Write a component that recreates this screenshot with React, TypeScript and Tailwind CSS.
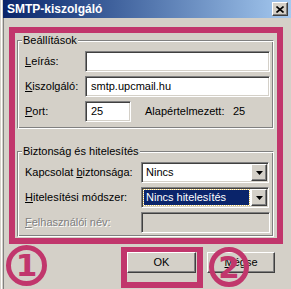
import React from "react";

const sunken =
  "border border-t-[#808080] border-l-[#808080] border-b-white border-r-white shadow-[inset_1px_1px_0_#404040,inset_-1px_-1px_0_#d4d0c8]";
const raised =
  "border border-t-white border-l-white border-b-[#404040] border-r-[#404040] shadow-[inset_-1px_-1px_0_#808080]";

function Arrow() {
  return (
    <div className={`w-[16px] h-[17px] bg-[#d4d0c8] flex items-center justify-center ${raised}`}>
      <svg width="7" height="4" viewBox="0 0 7 4">
        <path d="M0 0H7L3.5 4Z" fill="#000" />
      </svg>
    </div>
  );
}

function Group({ title, children, cls }: { title: string; children: React.ReactNode; cls: string }) {
  return (
    <fieldset
      className={`ml-[17px] w-[257px] border border-t-[#808080] border-l-[#808080] border-b-white border-r-white shadow-[inset_1px_1px_0_#fff,inset_-1px_-1px_0_#808080] pl-[7px] pr-[3px] ${cls}`}
    >
      <legend className="ml-[-3px] px-[1px] bg-[#d4d0c8] leading-[13px]">{title}</legend>
      {children}
    </fieldset>
  );
}

export default function App() {
  return (
    <div className="relative w-[291px] h-[289px] overflow-hidden bg-[#d4d0c8] text-[11px] leading-[13px] text-black font-['Liberation_Sans',Arial,sans-serif] shadow-[inset_1px_0_0_#d4d0c8,inset_2px_0_0_#ffffff,inset_3px_0_0_#d4d0c8,inset_4px_0_0_#808080] flex flex-col">
      {/* title bar */}
      <div className="ml-[3px] h-[18px] shrink-0 flex items-center justify-between pl-[4px] pr-[3px] bg-linear-to-r from-[#0a246a] to-[#a6caf0]">
        <span className="text-white font-bold text-[12px] leading-[14px]">SMTP-kiszolgáló</span>
        <div className={`w-[16px] h-[14px] bg-[#d4d0c8] flex items-center justify-center ${raised}`}>
          <svg width="8" height="7" viewBox="0 0 8 7">
            <path d="M0.5 0.5L7.5 6.5M7.5 0.5L0.5 6.5" stroke="#000" strokeWidth="1.6" />
          </svg>
        </div>
      </div>

      <Group title="Beállítások" cls="mt-[16px] pt-[4px] pb-[6px]">
        <div className="flex flex-col gap-[4px]">
          <div className="flex items-center h-[21px]">
            <span className="w-[60px]">
              <u>L</u>eírás:
            </span>
            <div className={`w-[185px] h-[21px] bg-white ${sunken}`} />
          </div>
          <div className="flex items-center h-[21px]">
            <span className="w-[60px]">
              <u>K</u>iszolgáló:
            </span>
            <div className={`w-[185px] h-[21px] bg-white flex items-center pl-[5px] ${sunken}`}>smtp.upcmail.hu</div>
          </div>
          <div className="flex items-center h-[21px]">
            <span className="w-[60px]">
              <u>P</u>ort:
            </span>
            <div className={`w-[46px] h-[21px] bg-white flex items-center pl-[5px] ${sunken}`}>25</div>
            <span className="ml-[14px] w-[88px] whitespace-nowrap">Alapértelmezett:</span>
            <span>25</span>
          </div>
        </div>
      </Group>

      <Group title="Biztonság és hitelesítés" cls="mt-[16px] pt-[4px] pb-[3px]">
        <div className="flex flex-col gap-[4px]">
          <div className="flex items-center h-[21px]">
            <span className="w-[116px] whitespace-nowrap">
              Kapcsolat <u>b</u>iztonsága:
            </span>
            <div className={`w-[128px] h-[21px] bg-white flex items-center justify-between pl-[4px] pr-[1px] ${sunken}`}>
              <span>Nincs</span>
              <Arrow />
            </div>
          </div>
          <div className="flex items-center h-[21px]">
            <span className="w-[116px] whitespace-nowrap">
              <u>H</u>itelesítési módszer:
            </span>
            <div className={`w-[128px] h-[21px] bg-white flex items-center justify-between pl-[2px] pr-[1px] ${sunken}`}>
              <span className="flex-1 mr-[2px] h-[15px] bg-[#0a246a] text-white pl-[2px] leading-[15px] outline-1 outline-dotted outline-[#e0c060]">
                Nincs hitelesítés
              </span>
              <Arrow />
            </div>
          </div>
          <div className="flex items-center h-[21px]">
            <span className="w-[116px] whitespace-nowrap text-[#808080] [text-shadow:1px_1px_0_#fff]">
              <u>F</u>elhasználói név:
            </span>
            <div className={`w-[129px] h-[21px] bg-[#d4d0c8] ${sunken}`} />
          </div>
        </div>
      </Group>

      <div className="mt-[15px] pr-[16px] flex justify-end gap-[11px]">
        <button className={`w-[69px] h-[21px] bg-[#d4d0c8] flex items-center justify-center ${raised}`}>OK</button>
        <button className={`w-[68px] h-[21px] bg-[#d4d0c8] flex items-center justify-center ${raised}`}>
          <span>
            <u>M</u>égse
          </span>
        </button>
      </div>

      {/* annotations */}
      <div className="absolute left-[9px] top-[27px] w-[274px] h-[217px] border-[6px] border-[#c1366c]" />
      <div className="absolute left-[121px] top-[247px] w-[82px] h-[41px] border-[6px] border-t-[5px] border-[#c1366c]" />
      <div className="absolute left-[6px] top-[245px] w-[41px] h-[41px] rounded-full border-[5px] border-[#c1366c] flex items-center justify-center text-[#c1366c] font-bold text-[31px] leading-none font-['DejaVu_Sans',sans-serif]">
        1
      </div>
      <div className="absolute left-[209px] top-[247px] w-[40px] h-[40px] rounded-full border-[5px] border-[#c1366c] flex items-center justify-center text-[#c1366c] font-bold text-[31px] leading-none font-['DejaVu_Sans',sans-serif]">
        2
      </div>
    </div>
  );
}
